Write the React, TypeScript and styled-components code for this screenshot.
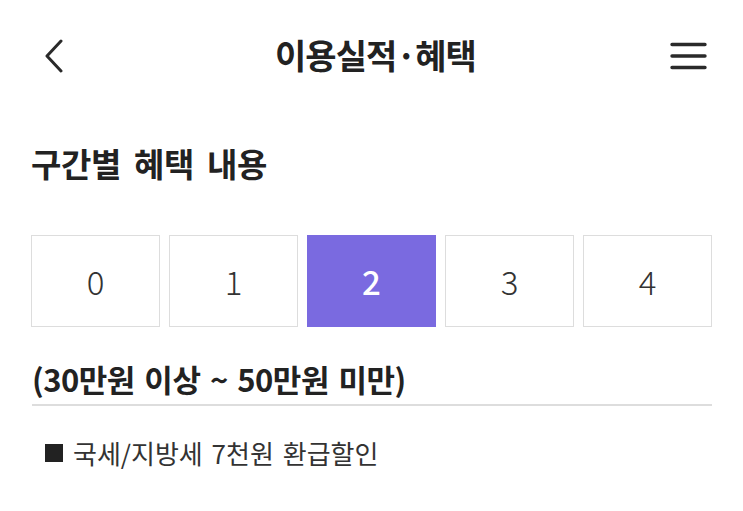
import React from "react";
import styled, { createGlobalStyle } from "styled-components";

const GlobalStyle = createGlobalStyle`
  html, body {
    margin: 0;
    padding: 0;
    background: #ffffff;
  }
  body {
    font-family: "Noto Sans CJK KR", "Noto Sans", sans-serif;
    color: #222222;
  }
`;

const Page = styled.div`
  width: 743px;
  min-height: 511px;
  background: #ffffff;
`;

const Header = styled.header`
  height: 112px;
  display: grid;
  grid-template-columns: 1fr auto 1fr;
  align-items: center;
  padding: 0 36px 0 44px;
  box-sizing: border-box;
`;

const IconButton = styled.button<{ $align: "start" | "end" }>`
  justify-self: ${(p) => p.$align};
  display: flex;
  align-items: center;
  justify-content: center;
  background: none;
  border: none;
  padding: 0;
  margin: 0;
  color: #2a2a2a;
  cursor: pointer;
`;

const Title = styled.h1`
  margin: 0 0 3px;
  font-size: 34px;
  font-weight: 700;
  line-height: 42px;
  letter-spacing: -1px;
  color: #222222;
  white-space: nowrap;
`;

const Content = styled.main`
  padding: 0 31px;
`;

const SectionTitle = styled.h2`
  margin: 31px 0 0;
  font-size: 33px;
  font-weight: 700;
  line-height: 40px;
  letter-spacing: -0.4px;
  word-spacing: 6px;
  color: #222222;
`;

const Tabs = styled.div`
  margin-top: 52px;
  display: grid;
  grid-template-columns: repeat(5, 1fr);
  gap: 9px;
`;

const Tab = styled.button<{ $active?: boolean }>`
  height: 92px;
  box-sizing: border-box;
  margin: 0;
  padding: 0;
  display: flex;
  align-items: center;
  justify-content: center;
  border: 1px solid ${(p) => (p.$active ? "#7a6ae0" : "#dddddd")};
  background: ${(p) => (p.$active ? "#7a6ae0" : "#ffffff")};
  color: ${(p) => (p.$active ? "#ffffff" : "#333333")};
  font-family: "Noto Sans CJK KR", "Noto Sans", sans-serif;
  font-size: 33px;
  font-weight: ${(p) => (p.$active ? 500 : 300)};
  cursor: pointer;
`;

const RangeTitle = styled.h3`
  margin: 33px 0 0 1px;
  padding-bottom: 6px;
  border-bottom: 2px solid #dddddd;
  font-size: 31px;
  font-weight: 700;
  line-height: 38px;
  letter-spacing: -0.5px;
  word-spacing: 3px;
  color: #222222;
`;

const BenefitList = styled.ul`
  list-style: none;
  margin: 31px 0 0;
  padding: 0 0 0 14px;
`;

const BenefitItem = styled.li`
  display: flex;
  align-items: center;
  font-size: 26px;
  font-weight: 400;
  line-height: 32px;
  word-spacing: 3px;
  color: #333333;
`;

const Square = styled.span`
  display: inline-block;
  width: 18px;
  height: 18px;
  background: #222222;
  margin-right: 10px;
  flex-shrink: 0;
`;

const BackIcon = () => (
  <svg width="20" height="34" viewBox="0 0 20 34" fill="none">
    <path
      d="M17 2 L3 17 L17 32"
      stroke="currentColor"
      strokeWidth="3"
      strokeLinecap="round"
      strokeLinejoin="round"
    />
  </svg>
);

const MenuIcon = () => (
  <svg width="37" height="30" viewBox="0 0 37 30" fill="none">
    <path
      d="M2 3.5 H35 M2 15 H35 M2 26.5 H35"
      stroke="currentColor"
      strokeWidth="3.4"
      strokeLinecap="round"
    />
  </svg>
);

const tiers = [0, 1, 2, 3, 4];

export default function App() {
  return (
    <Page>
      <GlobalStyle />
      <Header>
        <IconButton $align="start" aria-label="뒤로">
          <BackIcon />
        </IconButton>
        <Title>이용실적·혜택</Title>
        <IconButton $align="end" aria-label="메뉴">
          <MenuIcon />
        </IconButton>
      </Header>
      <Content>
        <SectionTitle>구간별 혜택 내용</SectionTitle>
        <Tabs>
          {tiers.map((t) => (
            <Tab key={t} $active={t === 2}>
              {t}
            </Tab>
          ))}
        </Tabs>
        <RangeTitle>(30만원 이상 ~ 50만원 미만)</RangeTitle>
        <BenefitList>
          <BenefitItem>
            <Square />
            국세/지방세 7천원 환급할인
          </BenefitItem>
        </BenefitList>
      </Content>
    </Page>
  );
}
